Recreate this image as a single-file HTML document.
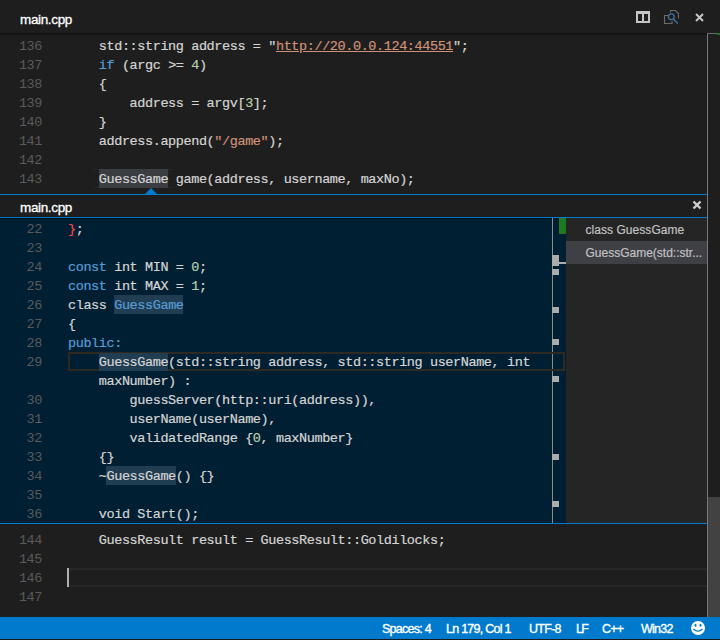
<!DOCTYPE html>
<html><head><meta charset="utf-8">
<style>
*{box-sizing:border-box}
html,body{margin:0;padding:0}
body{width:720px;height:640px;overflow:hidden;background:#1e1e1e;position:relative;font-family:"Liberation Sans",sans-serif}
.a{position:absolute}
.ln{position:absolute;left:0;width:42px;text-align:right;font-family:"Liberation Mono",monospace;font-size:13.5px;letter-spacing:-0.4px;line-height:23px;height:19px;color:#5a5a5a;white-space:pre}
.cd{-webkit-text-stroke:0.2px currentColor;position:absolute;left:68px;font-family:"Liberation Mono",monospace;font-size:13.5px;letter-spacing:-0.4px;line-height:23px;height:19px;color:#d4d4d4;white-space:pre}
.k{color:#569cd6}.n{color:#b5cea8}.s{color:#ce9178}.r{color:#f44747}
.u{text-decoration:underline}
.hl{background:#3a3d41}
.ph{background:#1f3a52}
.ui{font-family:"Liberation Sans",sans-serif;white-space:pre}
</style></head><body>
<!-- title bar -->
<div class="a ui" style="left:20px;top:11px;font-size:13.5px;letter-spacing:-0.35px;line-height:18px;color:#ffffff;-webkit-text-stroke:0.3px #fff">main.cpp</div>
<div class="a" style="left:0;top:33px;width:707px;height:2px;background:#141414"></div>
<svg class="a" style="left:636px;top:11px" width="14" height="12"><path d="M0 0H14V12H0Z M2 3V10H6V3Z M8 3V10H12V3Z" fill="#c5c5c5" fill-rule="evenodd"/></svg>
<svg class="a" style="left:663px;top:9px" width="17" height="16"><path d="M7.5 3.5V1.5H12.5L15.5 4.5V9.5" stroke="#6b6b6b" stroke-width="1.1" fill="none"/><path d="M5 6.5H1.5V14.5H9V12" stroke="#6b6b6b" stroke-width="1.1" fill="none"/><circle cx="8.3" cy="7.8" r="2.9" stroke="#3f72a0" stroke-width="1.3" fill="none"/><path d="M10.3 10L14.8 14.6" stroke="#3f72a0" stroke-width="1.5"/></svg>
<svg class="a" style="left:695px;top:13px" width="9" height="9"><path d="M1 1L8 8M8 1L1 8" stroke="#c5c5c5" stroke-width="2"/></svg>

<!-- main editor top lines -->
<div class="ln" style="top:35px">136</div><div class="cd" style="top:35px">    std::string address = "<span class="s u">http://20.0.0.124:44551</span>";</div>
<div class="ln" style="top:54px">137</div><div class="cd" style="top:54px">    <span class="k">if</span> (argc &gt;= <span class="n">4</span>)</div>
<div class="ln" style="top:73px">138</div><div class="cd" style="top:73px">    {</div>
<div class="ln" style="top:92px">139</div><div class="cd" style="top:92px">        address = argv[<span class="n">3</span>];</div>
<div class="ln" style="top:111px">140</div><div class="cd" style="top:111px">    }</div>
<div class="ln" style="top:130px">141</div><div class="cd" style="top:130px">    address.append(<span class="s">"/game"</span>);</div>
<div class="ln" style="top:149px">142</div>
<div class="a" style="left:94px;top:169px;width:79px;height:1px;background:#282828"></div><div class="a" style="left:94px;top:187px;width:79px;height:1px;background:#282828"></div>
<div class="a" style="left:99px;top:169px;width:69px;height:19px;background:#3a3d41"></div>
<div class="ln" style="top:168px">143</div><div class="cd" style="top:168px">    GuessGame game(address, username, maxNo);</div>

<!-- peek -->
<div class="a" style="left:0;top:194px;width:707px;height:1px;background:#007acc"></div>
<svg class="a" style="left:144px;top:188px" width="14" height="7"><path d="M0.5 6.5 L7 0 L13.5 6.5Z" fill="#007acc"/></svg>
<div class="a ui" style="left:20px;top:199px;font-size:13.5px;letter-spacing:-0.35px;line-height:18px;color:#ffffff;-webkit-text-stroke:0.3px #fff">main.cpp</div>
<div class="a" style="left:0;top:217px;width:707px;height:1px;background:#007acc"></div>
<div class="a" style="left:0;top:218px;width:552px;height:305px;background:#001f33"></div>
<div class="a" style="left:552px;top:218px;width:1px;height:305px;background:#8c8c8c"></div>
<div class="a" style="left:553px;top:218px;width:13px;height:305px;background:#001f33"></div>
<div class="a" style="left:0;top:218px;width:552px;height:1px;background:#00111d"></div>
<div class="a" style="left:566px;top:218px;width:141px;height:305px;background:#252526"></div>
<div class="a" style="left:0;top:523px;width:707px;height:1px;background:#007acc"></div>
<!-- peek code -->
<div class="ln" style="top:218px">22</div><div class="cd" style="top:218px"><span class="r">}</span>;</div>
<div class="ln" style="top:237px">23</div>
<div class="ln" style="top:256px">24</div><div class="cd" style="top:256px"><span class="k">const</span> int MIN = <span class="n">0</span>;</div>
<div class="ln" style="top:275px">25</div><div class="cd" style="top:275px"><span class="k">const</span> int MAX = <span class="n">1</span>;</div>
<div class="a" style="left:114px;top:295px;width:69px;height:19px;background:#213d52"></div>
<div class="ln" style="top:294px">26</div><div class="cd" style="top:294px">class <span class="k">GuessGame</span></div>
<div class="ln" style="top:313px">27</div><div class="cd" style="top:313px">{</div>
<div class="ln" style="top:332px">28</div><div class="cd" style="top:332px"><span class="k">public:</span></div>
<div class="a" style="left:68px;top:352px;width:497px;height:19px;border:2px solid #2e2a22"></div>
<div class="a" style="left:99px;top:353px;width:69px;height:18px;background:#213d52"></div>
<div class="ln" style="top:351px">29</div><div class="cd" style="top:351px">    GuessGame(std::string address, std::string userName, int</div>
<div class="cd" style="top:370px">    maxNumber) :</div>
<div class="ln" style="top:389px">30</div><div class="cd" style="top:389px">        guessServer(http::uri(address)),</div>
<div class="ln" style="top:408px">31</div><div class="cd" style="top:408px">        userName(userName),</div>
<div class="ln" style="top:427px">32</div><div class="cd" style="top:427px">        validatedRange {<span class="n">0</span>, maxNumber}</div>
<div class="ln" style="top:446px">33</div><div class="cd" style="top:446px">    {}</div>
<div class="a" style="left:106px;top:466px;width:70px;height:19px;background:#213d52"></div>
<div class="ln" style="top:465px">34</div><div class="cd" style="top:465px">    ~GuessGame() {}</div>
<div class="ln" style="top:484px">35</div>
<div class="ln" style="top:503px">36</div><div class="cd" style="top:503px">    void Start();</div>
<!-- peek ruler markers -->
<div class="a" style="left:559px;top:218px;width:7px;height:16px;background:#1e7a1e"></div>
<div class="a" style="left:552px;top:255px;width:7px;height:11px;background:#acacac"></div>
<div class="a" style="left:559px;top:262px;width:7px;height:2px;background:#acacac"></div>
<div class="a" style="left:552px;top:269px;width:7px;height:6px;background:#acacac"></div>
<div class="a" style="left:552px;top:307px;width:7px;height:6px;background:#acacac"></div>
<div class="a" style="left:552px;top:339px;width:7px;height:6px;background:#acacac"></div>
<div class="a" style="left:552px;top:376px;width:7px;height:6px;background:#acacac"></div>
<div class="a" style="left:552px;top:454px;width:7px;height:6px;background:#acacac"></div>
<div class="a" style="left:552px;top:501px;width:7px;height:6px;background:#acacac"></div>
<!-- tree -->
<div class="a" style="left:566px;top:241px;width:141px;height:23px;background:#3f3f46"></div>
<div class="a ui" style="left:585.5px;top:221px;font-size:12px;letter-spacing:0.05px;line-height:18px;color:#c0c0c0;-webkit-text-stroke:0.2px #c0c0c0">class GuessGame</div>
<div class="a ui" style="left:585.5px;top:244px;font-size:12px;letter-spacing:0px;line-height:18px;color:#c0c0c0;-webkit-text-stroke:0.2px #c0c0c0">GuessGame(std::str...</div>
<svg class="a" style="left:692px;top:200px" width="10" height="10"><path d="M1.5 1.5L8.5 8.5M8.5 1.5L1.5 8.5" stroke="#cfcfcf" stroke-width="2.4"/></svg>


<!-- main editor bottom lines -->
<div class="ln" style="top:529px">144</div><div class="cd" style="top:529px">    GuessResult result = GuessResult::Goldilocks;</div>
<div class="ln" style="top:548px">145</div>
<div class="a" style="left:68px;top:568px;width:639px;height:19px;border-top:2px solid #282828;border-bottom:2px solid #282828"></div>
<div class="ln" style="top:567px">146</div>
<div class="a" style="left:67px;top:568px;width:2px;height:19px;background:#aeafad"></div>
<div class="ln" style="top:586px">147</div>

<!-- right ruler / scrollbar -->
<div class="a" style="left:707px;top:33px;width:1px;height:584px;background:#7a7a7a"></div>
<div class="a" style="left:707px;top:33px;width:10px;height:1px;background:#6a6a6a"></div>
<div class="a" style="left:717px;top:33px;width:3px;height:2px;background:#1e7a1e"></div>
<div class="a" style="left:708px;top:497px;width:12px;height:120px;background:#424242"></div>

<!-- status bar -->
<div class="a" style="left:0;top:617px;width:720px;height:22px;background:#007acc"></div>
<div class="a" style="left:0;top:639px;width:720px;height:1px;background:#1a1a1a"></div>

<div class="a ui" style="left:382px;top:620px;font-size:12.5px;line-height:18px;color:#fff;letter-spacing:-0.75px;-webkit-text-stroke:0.35px #fff">Spaces: 4</div>
<div class="a ui" style="left:446px;top:620px;font-size:12.5px;line-height:18px;color:#fff;letter-spacing:-0.75px;-webkit-text-stroke:0.35px #fff">Ln 179, Col 1</div>
<div class="a ui" style="left:529px;top:620px;font-size:12.5px;line-height:18px;color:#fff;letter-spacing:-0.75px;-webkit-text-stroke:0.35px #fff">UTF-8</div>
<div class="a ui" style="left:576px;top:620px;font-size:12.5px;line-height:18px;color:#fff;letter-spacing:-1.6px;-webkit-text-stroke:0.35px #fff">LF</div>
<div class="a ui" style="left:602px;top:620px;font-size:12.5px;line-height:18px;color:#fff;letter-spacing:-0.75px;-webkit-text-stroke:0.35px #fff">C++</div>
<div class="a ui" style="left:641px;top:620px;font-size:12.5px;line-height:18px;color:#fff;letter-spacing:-0.75px;-webkit-text-stroke:0.35px #fff">Win32</div>
<svg class="a" style="left:690px;top:620px" width="16" height="16"><circle cx="8" cy="8" r="7" fill="#fff"/><ellipse cx="5.5" cy="5.3" rx="1" ry="1.5" fill="#007acc"/><ellipse cx="10.5" cy="5.3" rx="1" ry="1.5" fill="#007acc"/><path d="M3.5 9 Q8 13.2 12.5 9" stroke="#007acc" stroke-width="1.3" fill="none"/></svg>
</body></html>
